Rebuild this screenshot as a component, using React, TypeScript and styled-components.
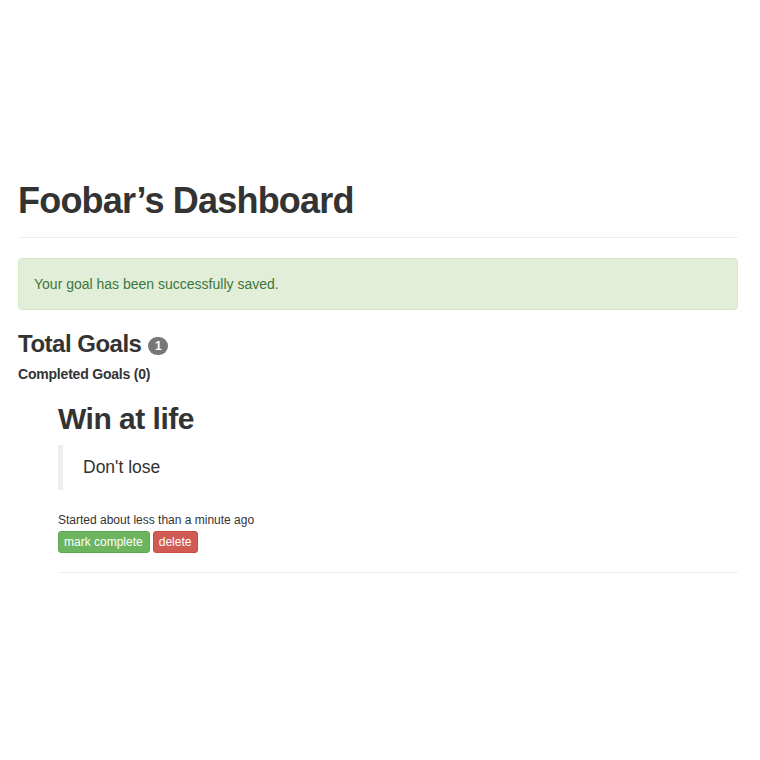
import React from 'react';
import styled, { createGlobalStyle } from 'styled-components';

const GlobalStyle = createGlobalStyle`
  html, body {
    margin: 0;
    padding: 0;
    background: #ffffff;
  }
  body {
    font-family: 'Liberation Sans', Arial, Helvetica, sans-serif;
    font-size: 14px;
    line-height: 1.42857143;
    color: #333333;
  }
`;

const Page = styled.div`
  padding: 138px 22px 40px 18px;
`;

const PageHeader = styled.div`
  margin: 40px 0 20px;
  padding-bottom: 9px;
  border-bottom: 1px solid #eeeeee;
`;

const Title = styled.h1`
  margin: 0 0 7px;
  padding-top: 3px;
  font-size: 36px;
  line-height: 1.1;
  font-weight: 700;
  letter-spacing: -0.8px;
`;

const Alert = styled.div`
  margin-bottom: 20px;
  padding: 15px;
  border: 1px solid #d6e9c6;
  border-radius: 4px;
  background: #e2eed8;
  color: #3c763d;
  font-size: 14px;
  line-height: 20px;
`;

const SectionTitle = styled.h3`
  margin: 21px 0 9px;
  font-size: 24px;
  line-height: 1.1;
  font-weight: 700;
  letter-spacing: -0.5px;
  display: flex;
  align-items: center;
  gap: 7px;
`;

const Badge = styled.span`
  display: inline-block;
  min-width: 8px;
  padding: 3px 6px;
  margin-top: 5px;
  border-radius: 10px;
  background: #777777;
  color: #ffffff;
  font-size: 12px;
  font-weight: 700;
  line-height: 1;
  letter-spacing: 0;
  text-align: center;
`;

const SubTitle = styled.h5`
  margin: 10px 0 10px;
  font-size: 14px;
  line-height: 1.1;
  font-weight: 700;
  letter-spacing: -0.2px;
`;

const GoalList = styled.ul`
  margin: 0;
  padding: 0 0 0 40px;
  list-style: none;
`;

const GoalItem = styled.li`
  padding-top: 10px;
`;

const GoalName = styled.h2`
  margin: 0 0 10px;
  font-size: 30px;
  line-height: 1.1;
  font-weight: 700;
  letter-spacing: -0.5px;
`;

const Quote = styled.blockquote`
  margin: 0 0 20px;
  padding: 10px 20px;
  border-left: 5px solid #eeeeee;
  font-size: 17.5px;
  line-height: 25px;
`;

const Meta = styled.div`
  padding-top: 2px;
  font-size: 12px;
  line-height: 17px;
`;

const Actions = styled.div`
  display: flex;
  gap: 3px;
  margin-top: 2px;
`;

const Button = styled.button<{ $variant: 'success' | 'danger' }>`
  padding: 1px 6px 1px 5px;
  border: 1px solid ${p => (p.$variant === 'success' ? '#5fa852' : '#c94c45')};
  border-radius: 3px;
  background: ${p => (p.$variant === 'success' ? '#6db45e' : '#d05b53')};
  color: #ffffff;
  font-family: inherit;
  font-size: 12px;
  line-height: 18px;
  cursor: pointer;
`;

const Divider = styled.hr`
  margin: 19px 0 20px;
  border: 0;
  border-top: 1px solid #eeeeee;
`;

export default function App() {
  return (
    <>
      <GlobalStyle />
      <Page>
        <PageHeader>
          <Title>Foobar’s Dashboard</Title>
        </PageHeader>
        <Alert>Your goal has been successfully saved.</Alert>
        <SectionTitle>
          Total Goals <Badge>1</Badge>
        </SectionTitle>
        <SubTitle>Completed Goals (0)</SubTitle>
        <GoalList>
          <GoalItem>
            <GoalName>Win at life</GoalName>
            <Quote>Don't lose</Quote>
            <Meta>Started about less than a minute ago</Meta>
            <Actions>
              <Button $variant="success">mark complete</Button>
              <Button $variant="danger">delete</Button>
            </Actions>
            <Divider />
          </GoalItem>
        </GoalList>
      </Page>
    </>
  );
}
